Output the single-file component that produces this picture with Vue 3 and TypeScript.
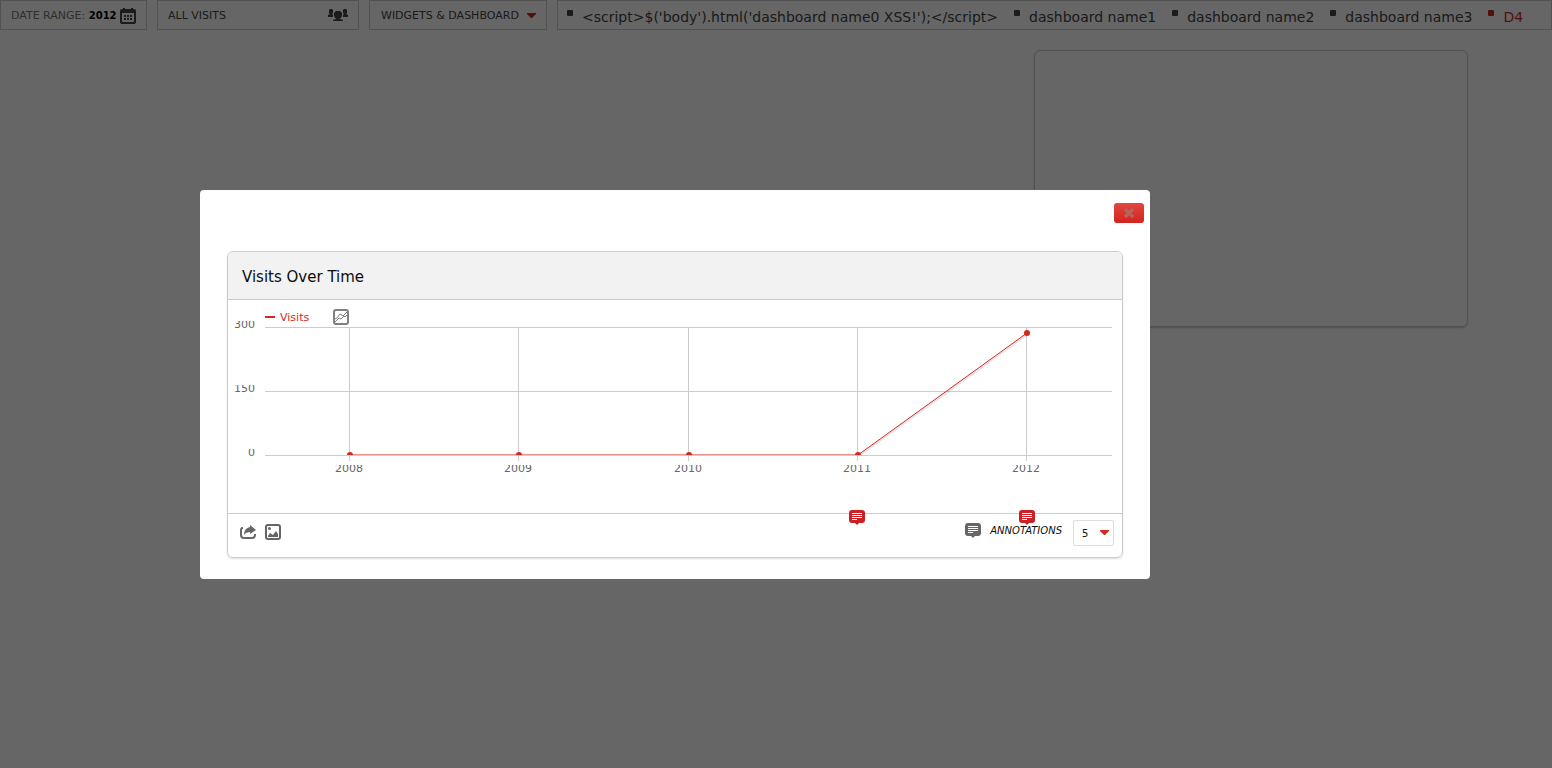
<script setup lang="ts">
import { ref } from 'vue'

const dashboards: string[] = [
  "<script>$('body').html('dashboard name0 XSS!');<\/script>",
  'dashboard name1',
  'dashboard name2',
  'dashboard name3',
  'D4',
]
const activeDashboard = ref('D4')
const showDialog = ref(true)
const limit = ref('5')
const limits: string[] = ['5', '10', '25']

const grid = [
  { y: 27, label: '300' },
  { y: 91, label: '150' },
  { y: 155, label: '0' },
]
const points = [
  { x: 122, y: 155, label: '2008' },
  { x: 291, y: 155, label: '2009' },
  { x: 461, y: 155, label: '2010' },
  { x: 630, y: 155, label: '2011' },
  { x: 799, y: 33, label: '2012' },
]
const line = points.map((p) => `${p.x},${p.y}`).join(' ')
const notes: number[] = [621, 791]
</script>

<template>
  <div class="page">
    <header class="topbar">
      <button class="box date" type="button">
        <span class="muted">DATE RANGE: <b>2012</b></span>
        <svg width="16" height="17" viewBox="0 0 16 17" aria-hidden="true">
          <path d="M2 1h1v-1h2v1h6v-1h2v1h1q2 0 2 2v11q0 2-2 2H2q-2 0-2-2V3q0-2 2-2zM2 5v8q0 1 1 1h10q1 0 1-1V5z" fill="#444" fill-rule="evenodd" />
          <path d="M4 7h2v2H4zM7 7h2v2H7zM10 7h2v2h-2zM4 10h2v2H4zM7 10h2v2H7zM10 10h2v2h-2z" fill="#444" />
        </svg>
      </button>
      <button class="box segment" type="button">
        <span>ALL VISITS</span>
        <svg width="20" height="12" viewBox="0 0 20 12" fill="#444" aria-hidden="true">
          <path d="M2 0h2l1 1v3l-1 1 1 1v2H0V6l2-1-1-1V1zM16 0h2l1 1v3l-1 1 2 1v2h-5V6l1-1-1-1V1z" />
          <path d="M8 2h4l2 2v3l-2 3 3 1v1H5v-1l3-1-2-3V4z" />
        </svg>
      </button>
      <button class="box widgets" type="button">
        <span>WIDGETS &amp; DASHBOARD</span>
        <svg width="9" height="5" viewBox="0 0 9 5" aria-hidden="true"><path d="M0 0h9v1L5 5H4L0 1z" fill="#d4291f" /></svg>
      </button>
      <nav class="box tabs">
        <a
          v-for="name in dashboards"
          :key="name"
          href="#"
          :class="{ active: name === activeDashboard }"
          @click.prevent="activeDashboard = name"
        >{{ name }}</a>
      </nav>
    </header>

    <main class="columns"><section class="placeholder"></section></main>

    <div v-if="showDialog" class="overlay">
      <div class="dialog" role="dialog" aria-label="Visits Over Time">
        <button class="close" type="button" aria-label="Close" @click="showDialog = false">
          <svg width="12" height="12" viewBox="0 0 12 12" aria-hidden="true"><path d="M2 2l8 8M10 2l-8 8" stroke="#b5635f" stroke-width="3.2" /></svg>
        </button>
        <section class="panel">
          <h2>Visits Over Time</h2>
          <div class="chart">
            <svg class="plot" viewBox="0 0 894 213" role="img" aria-label="Visits per year">
              <defs>
                <clipPath id="plot-area"><rect x="37" y="20" width="857" height="135" /></clipPath>
                <clipPath v-for="g in grid" :id="'row' + g.y" :key="g.y"><rect x="0" :y="g.y - 6" width="36" height="12" /></clipPath>
                <clipPath id="years"><rect x="37" y="165" width="857" height="14" /></clipPath>
              </defs>
              <path d="M37 17h10" stroke="#d4291f" stroke-width="2" />
              <text class="legend" x="52" y="21">Visits</text>
              <g fill="none" stroke="#808080">
                <rect x="106" y="10" width="14" height="14" rx="2" stroke-width="2" />
                <path d="M107 22l4-4 2 1 3-3 1 1 3-3M107 19l2-1 3-4 3 2 4-4" />
              </g>
              <g stroke="#ccc" shape-rendering="crispEdges">
                <path v-for="g in grid" :key="g.y" :d="`M37 ${g.y}.5H884`" />
                <path v-for="p in points" :key="p.x" :d="`M${p.x - 1}.5 27V161`" />
              </g>
              <text v-for="g in grid" :key="g.label" class="tick" :clip-path="`url(#row${g.y})`" x="27" :y="g.y + 1" text-anchor="end">{{ g.label }}</text>
              <g clip-path="url(#years)">
                <text v-for="p in points" :key="p.label" class="tick" :x="p.x - 1" y="172" text-anchor="middle">{{ p.label }}</text>
              </g>
              <g clip-path="url(#plot-area)">
                <polyline :points="line" fill="none" stroke="#000" stroke-opacity="0.1" stroke-width="2" transform="translate(1 1)" />
                <polyline :points="line" fill="none" stroke="#d4291f" />
                <circle v-for="p in points" :key="p.label" :cx="p.x" :cy="p.y" r="3" fill="#d4291f" />
              </g>
              <g v-for="x in notes" :key="x" :transform="`translate(${x} 210)`">
                <path d="M3 0h10q3 0 3 3v7q0 3-3 3h-3l-2 2-2-2H3q-3 0-3-3V3q0-3 3-3z" fill="#cb2026" />
                <path d="M3 3.5h10M3 5.5h10M3 7.5h10M3 9.5h5" stroke="#fff" />
              </g>
            </svg>
          </div>
          <footer>
            <button class="tool" type="button" aria-label="Export">
              <svg width="16" height="16" viewBox="0 0 16 16" aria-hidden="true">
                <path d="M3 4H2q-1 1-1 2v5q0 3 3 3h8q3 0 3-3v-1" fill="none" stroke="#666" stroke-width="2" />
                <path d="M10 1l6 5-6 4V8Q6 8 4 11q0-7 6-8z" fill="#666" />
              </svg>
            </button>
            <button class="tool" type="button" aria-label="Export as image">
              <svg width="16" height="16" viewBox="0 0 16 16" aria-hidden="true">
                <rect x="1" y="1" width="14" height="14" rx="2" fill="none" stroke="#666" stroke-width="2" />
                <path d="M3 13v-1l2-3 3 2 3-4 2 3v3z" fill="#666" /><circle cx="4.500" cy="4.500" r="1.500" fill="#666" />
              </svg>
            </button>
            <button class="annotations" type="button">
              <svg width="16" height="15" viewBox="0 0 16 15" aria-hidden="true">
                <path d="M3 0h10q3 0 3 3v7q0 3-3 3h-3l-2 2-2-2H3q-3 0-3-3V3q0-3 3-3z" fill="#666" />
                <path d="M3 3.5h10M3 5.5h10M3 7.5h10M3 9.5h5" stroke="#fff" />
              </svg>
              <em>ANNOTATIONS</em>
            </button>
            <div class="limit">
              <select v-model="limit" aria-label="Periods to plot">
                <option v-for="n in limits" :key="n">{{ n }}</option>
              </select>
              <svg width="9" height="5" viewBox="0 0 9 5" aria-hidden="true"><path d="M0 0h9v1L5 5H4L0 1z" fill="#d4291f" /></svg>
            </div>
          </footer>
        </section>
      </div>
    </div>
  </div>
</template>

<style>
body { background: #fff; overflow: hidden; }
</style>

<style scoped>
.page { min-height: 100vh; font: 11px/16px "DejaVu Sans", sans-serif; color: #444; }
button { border: 0; padding: 0; background: none; font: inherit; color: inherit; cursor: pointer; }
svg { display: block; flex: none; }
.topbar { display: flex; gap: 10px; }
.box { box-sizing: border-box; height: 30px; border: 1px solid #ccc; display: flex; align-items: center; justify-content: space-between; white-space: nowrap; font-size: 11px; }
.date { width: 147px; padding: 2px 10px 0; }
.segment { width: 202px; padding: 0 10px; }
.widgets { width: 178px; padding: 0 10px 0 11px; }
.segment span, .widgets span { padding-top: 2px; }
.muted { color: #777; }
.muted b { font-size: 10px; color: #000; }
.tabs { flex: 1; justify-content: flex-start; gap: 16px; padding: 3px 9px 0; font-size: 14px; }
.tabs a { color: #444; text-decoration: none; display: flex; gap: 9px; }
.tabs a::before { content: ""; width: 6px; height: 6px; margin-top: 1px; border-radius: 1px; background: currentColor; }
.tabs a.active { color: #d4291f; }
.columns { padding-top: 20px; }
.placeholder { box-sizing: border-box; width: 28%; height: 277px; margin-left: 66.6%; border: 1px solid #ccc; border-radius: 6px; box-shadow: 0 1px 2px #ccc; }
.overlay { position: fixed; inset: 0; background: rgba(0, 0, 0, 0.6); padding: 190px 402px 0 200px; }
.dialog { position: relative; background: #fff; border-radius: 4px; padding: 61px 27px 21px; }
.close { position: absolute; top: 13px; right: 6px; width: 30px; height: 20px; border-radius: 3px; background: linear-gradient(#e14740, #d4231d); display: grid; place-items: center; }
.panel { border: 1px solid #ccc; border-radius: 6px; box-shadow: 0 1px 2px #ddd; }
h2 { margin: 0; padding: 15px 14px 12px; background: #f2f2f2; border-bottom: 1px solid #ccc; border-radius: 5px 5px 0 0; font-size: 15px; font-weight: 400; line-height: 20px; color: #0d0d0d; }
.chart { position: relative; z-index: 1; }
.plot { width: 100%; overflow: visible; pointer-events: none; }
.legend { fill: #d4291f; font-size: 11px; }
.tick { fill: #666; font-size: 11px; }
footer { display: flex; align-items: center; gap: 9px; min-height: 43px; padding: 0 8px 0 12px; border-top: 1px solid #ccc; }
.tool { display: block; padding-bottom: 7px; }
.annotations { display: flex; align-items: center; gap: 9px; margin: 0 2px 0 auto; padding-bottom: 10px; font-size: 10px; color: #0d0d0d; }
.limit { position: relative; display: flex; margin-bottom: 5px; }
.limit select { appearance: none; box-sizing: border-box; width: 41px; height: 26px; padding: 0 8px; border: 1px solid #ddd; border-radius: 2px; background: #fff; font: 10px "DejaVu Sans", sans-serif; color: #0d0d0d; }
.limit svg { position: absolute; right: 5px; top: 10px; pointer-events: none; }
</style>
